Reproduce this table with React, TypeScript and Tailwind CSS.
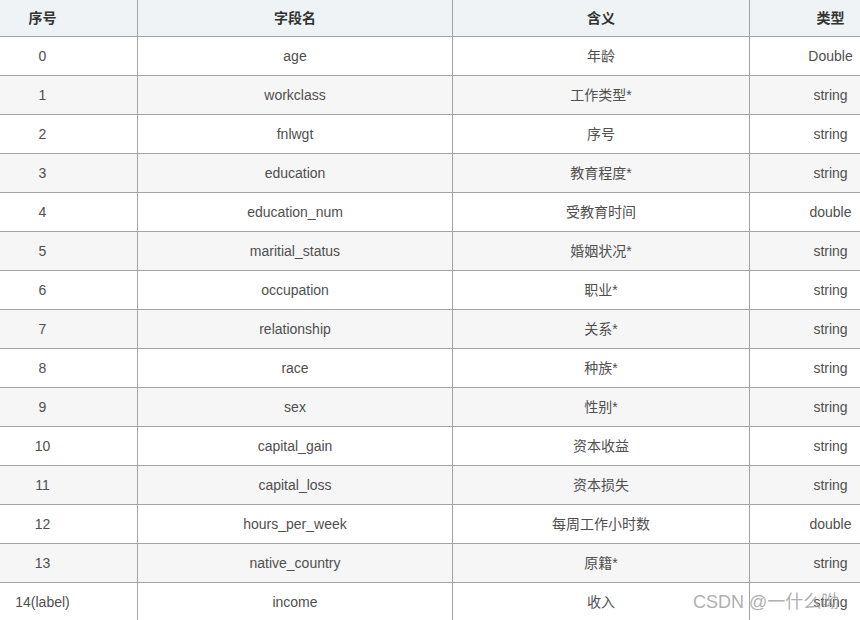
import React from "react";

const rows: [string, string, string, string][] = [
  ["0", "age", "年龄", "Double"],
  ["1", "workclass", "工作类型*", "string"],
  ["2", "fnlwgt", "序号", "string"],
  ["3", "education", "教育程度*", "string"],
  ["4", "education_num", "受教育时间", "double"],
  ["5", "maritial_status", "婚姻状况*", "string"],
  ["6", "occupation", "职业*", "string"],
  ["7", "relationship", "关系*", "string"],
  ["8", "race", "种族*", "string"],
  ["9", "sex", "性别*", "string"],
  ["10", "capital_gain", "资本收益", "string"],
  ["11", "capital_loss", "资本损失", "string"],
  ["12", "hours_per_week", "每周工作小时数", "double"],
  ["13", "native_country", "原籍*", "string"],
  ["14(label)", "income", "收入", "string"],
];

const cols = "grid grid-cols-[190px_315px_297px_162px]";
const cell = "flex items-center justify-center border-r border-b border-[#a3a3a3]";

export default function App() {
  return (
    <div
      className="relative w-[860px] h-[620px] overflow-hidden bg-white text-[14px]"
      style={{ fontFamily: '"Liberation Sans", Arial, "Noto Sans CJK SC", sans-serif' }}
    >
      <div className="-ml-[52px] w-[964px]">
        <div className={`${cols} h-[37px] bg-[#eff3f5] font-bold text-[#333]`}>
          <div className={cell}>序号</div>
          <div className={cell}>字段名</div>
          <div className={cell}>含义</div>
          <div className={cell}>类型</div>
        </div>
        {rows.map((r, i) => (
          <div
            key={i}
            className={`${cols} h-[39px] text-[#4f4f4f] ${i % 2 === 1 ? "bg-[#f6f6f6]" : "bg-white"}`}
          >
            {r.map((c, j) => (
              <div key={j} className={cell}>
                {c}
              </div>
            ))}
          </div>
        ))}
      </div>
      <div
        className="absolute left-[693px] top-[592px] text-[18px] leading-[20px] text-[#9a9a9a]/80 whitespace-nowrap"
        style={{ fontFamily: '"Liberation Sans", "Noto Sans CJK SC", sans-serif' }}
      >
        CSDN @一什么呦
      </div>
    </div>
  );
}
